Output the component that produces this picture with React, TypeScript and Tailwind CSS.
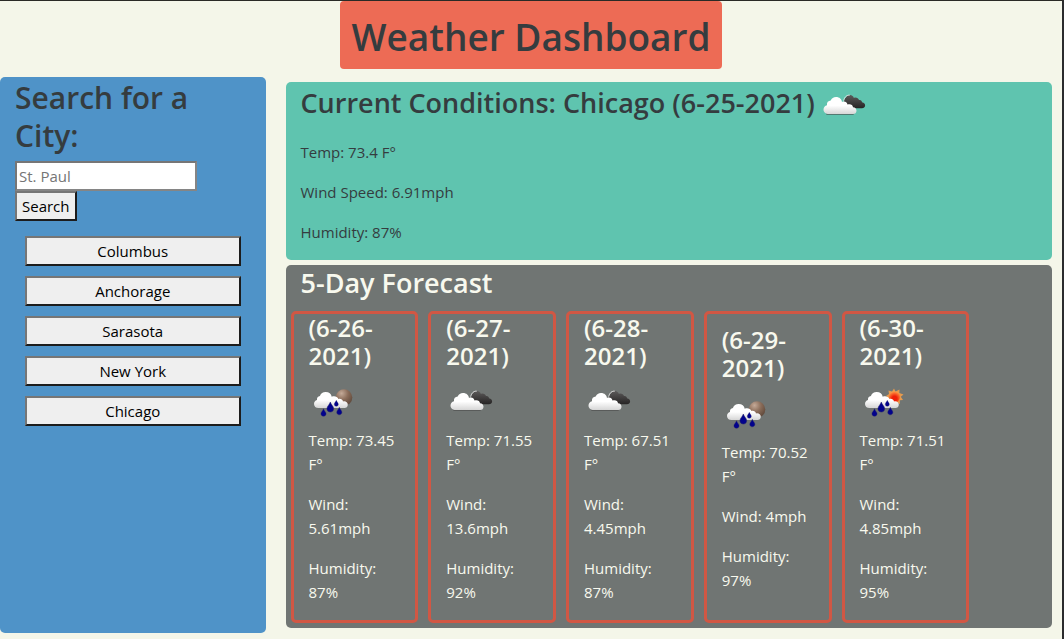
import React from "react";

type Sky = "broken" | "rain-night" | "rain-day";

const WHITE_CLOUD =
  "M10 32C6.500 32 4.500 30 4.500 27.400C4.500 25.300 6 23.600 8 23.200C7.600 20.500 9.300 18.600 11.700 18.500C12.600 16.300 14.500 15 17 15C20.500 15 22.700 17.300 23 20C25.600 19 28 20 28.500 22.600C31 21.500 33.800 22.600 34 25.200C36.200 25.300 37.500 26.800 37.500 28.700C37.500 30.700 36.200 32 34.200 32Z";
const RAIN_CLOUD =
  "M9.500 30C6.800 30 5 28.200 5 25.900C5 23.900 6.200 22.500 8 22C7.700 19.700 8.900 18.200 10.900 17.900C11.800 15.600 13.800 14 16.700 14C20 14 22.300 16 22.700 18.700C25.600 17.600 28.400 18.600 29.400 21C31.300 20.300 33.700 21.400 34 23.500C36.500 22.900 38.800 24.300 38.800 26.700C38.800 28.700 37.400 30 35.400 30Z";

function Drop({ x, y, s }: { x: number; y: number; s: number }) {
  return (
    <path
      d="M0 -4C0.600 -1.800 2.700 -0.600 2.700 1.400C2.700 3 1.500 4 0 4C-1.500 4 -2.700 3 -2.700 1.400C-2.700 -0.600 -0.600 -1.800 0 -4Z"
      transform={`translate(${x} ${y}) scale(${s})`}
      fill="#02028c"
      stroke="#23236b"
      strokeWidth="0.4"
    />
  );
}

function WeatherIcon({ sky, label }: { sky: Sky; label: string }) {
  const id = React.useId();
  return (
    <svg viewBox="0 0 50 50" className="block size-[50px] shrink-0" role="img" aria-label={label}>
      <defs>
        <linearGradient id={`${id}w`} x1="0" y1="0" x2="0" y2="1">
          <stop offset="0.5" stopColor="#ffffff" />
          <stop offset="1" stopColor="#d6d6d6" />
        </linearGradient>
        <linearGradient id={`${id}d`} x1="0" y1="0" x2="0" y2="1">
          <stop offset="0" stopColor="#5c5a5a" />
          <stop offset="1" stopColor="#262424" />
        </linearGradient>
        <radialGradient id={`${id}m`} cx="0.35" cy="0.25" r="0.8">
          <stop offset="0" stopColor="#c4aa98" />
          <stop offset="0.5" stopColor="#8a6c59" />
          <stop offset="1" stopColor="#5d4739" />
        </radialGradient>
        <radialGradient id={`${id}s`} cx="0.5" cy="0.65" r="0.65">
          <stop offset="0.35" stopColor="#ee1f08" />
          <stop offset="1" stopColor="#ff9a45" />
        </radialGradient>
      </defs>
      {sky === "broken" && (
        <>
          <path
            d="M25 21C25 17.500 25.600 16.500 26.800 15.800C27.300 13.700 29 12.700 31 13C33 13.300 34.400 14.200 34.900 15.900C36.900 14.900 39.400 16 40 18C41.700 17.500 43 18.800 43 20.300C45.200 20.500 46.300 22 46.100 23.800C45.900 25.400 44.700 26.300 43 26.300H29Z"
            fill={`url(#${id}d)`}
          />
          <path d="M24.700 18.600C25.400 15.300 27.700 12.900 30.700 13.200" fill="none" stroke="#f2f2f2" strokeWidth="0.9" />
          <path d="M8 32H34" stroke="#4a4a4a" strokeOpacity="0.6" strokeWidth="1.800" strokeLinecap="round" />
          <path d={WHITE_CLOUD} fill={`url(#${id}w)`} />
        </>
      )}
      {sky === "rain-night" && <circle cx="35" cy="19.500" r="8.300" fill={`url(#${id}m)`} />}
      {sky === "rain-day" && (
        <>
          <path
            d="M34 10.500L35.500 13.500L39.500 11.500L39.300 15L43.500 16.500L40.800 18.800L43 22L39.800 22.300L40 26L36.500 24.500L33 27L30 24L27 25L28.500 20L26 18L29 16L28.500 12.500L32 13.500Z"
            fill="#e59a4e"
          />
          <circle cx="34.500" cy="19" r="5.500" fill={`url(#${id}s)`} />
        </>
      )}
      {sky !== "broken" && (
        <>
          <path d={RAIN_CLOUD} fill={`url(#${id}w)`} />
          <Drop x={14.5} y={34.5} s={0.95} />
          <Drop x={21.3} y={29} s={1.25} />
          <Drop x={27.3} y={25.3} s={0.75} />
          <Drop x={30.3} y={33} s={0.95} />
        </>
      )}
    </svg>
  );
}

const cities = ["Columbus", "Anchorage", "Sarasota", "New York", "Chicago"];

const days: { date: string; sky: Sky; label: string; temp: string; wind: string; humidity: string }[] = [
  { date: "6-26-2021", sky: "rain-night", label: "Rain", temp: "73.45", wind: "5.61", humidity: "87" },
  { date: "6-27-2021", sky: "broken", label: "Broken clouds", temp: "71.55", wind: "13.6", humidity: "92" },
  { date: "6-28-2021", sky: "broken", label: "Broken clouds", temp: "67.51", wind: "4.45", humidity: "87" },
  { date: "6-29-2021", sky: "rain-night", label: "Rain", temp: "70.52", wind: "4", humidity: "97" },
  { date: "6-30-2021", sky: "rain-day", label: "Light rain", temp: "71.51", wind: "4.85", humidity: "95" },
];

const buttonStyle =
  "h-[30px] border-2 border-t-[#767676] border-l-[#767676] border-r-[#1c1c1c] border-b-[#1c1c1c] bg-[#efefef] px-[5px] text-black";

export default function App() {
  return (
    <div className="min-h-screen border-t border-r-2 border-t-[#2a2a26] border-r-[#2b2c2e] bg-[#f4f6e9] font-['Open_Sans','Noto_Sans',sans-serif] text-[15px] leading-6 text-[#353c3f]">
      <header className="mb-2 flex justify-center">
        <h1 className="rounded bg-[#ed6b55] px-3 pt-3 pb-2 text-[37px] leading-[48px] font-semibold">
          Weather Dashboard
        </h1>
      </header>

      <div className="flex">
        <aside className="w-1/4 rounded-[5px] bg-[#4f93c8] px-[15px]">
          <h2 className="mb-[6px] pt-[2px] text-[30px] leading-[38px] font-semibold">
            <label htmlFor="city">Search for a City:</label>
          </h2>
          <form onSubmit={(e) => e.preventDefault()}>
            <input
              id="city"
              type="text"
              placeholder="St. Paul"
              className="block h-[30px] w-[182px] border-2 border-t-[#767676] border-l-[#767676] border-r-[#858585] border-b-[#858585] bg-white px-[2px] text-black placeholder:text-[#757575]"
            />
            <button type="submit" className={buttonStyle}>
              Search
            </button>
          </form>
          <div className="flex flex-col gap-[10px] px-[10px] py-[15px]">
            {cities.map((city) => (
              <button key={city} type="button" className={`${buttonStyle} flex items-center justify-center`}>
                {city}
              </button>
            ))}
          </div>
        </aside>

        <main className="flex min-w-0 flex-1 flex-col gap-[5px] py-[5px] pr-[10px] pl-5">
          <section className="rounded-[5px] bg-[#5fc4af] px-[15px]">
            <h3 className="mb-2 flex items-center gap-1 text-[27px] leading-[34px] font-semibold">
              <span className="pb-2">Current Conditions: Chicago (6-25-2021)</span>
              <WeatherIcon sky="broken" label="Broken clouds" />
            </h3>
            <p className="mb-4">Temp: 73.4 F°</p>
            <p className="mb-4">Wind Speed: 6.91mph</p>
            <p className="pb-4">Humidity: 87%</p>
          </section>

          <section className="rounded-[5px] bg-[#707573] text-[#f8f9ee]">
            <h3 className="mb-[6px] px-[15px] text-[27px] leading-[35px] font-semibold">5-Day Forecast</h3>
            <div className="flex">
              {days.map((day) => (
                <article
                  key={day.date}
                  className="m-[5px] flex min-h-[312px] w-1/6 shrink-0 flex-col justify-center rounded-[5px] border-3 border-[#d15744] px-[15px]"
                >
                  <h4 className="mb-2 text-2xl leading-7 font-semibold">{`(${day.date})`}</h4>
                  <WeatherIcon sky={day.sky} label={day.label} />
                  <p className="mb-4">Temp: {day.temp} F°</p>
                  <p className="mb-4">Wind: {day.wind}mph</p>
                  <p className="mb-4">Humidity: {day.humidity}%</p>
                </article>
              ))}
            </div>
          </section>
        </main>
      </div>
    </div>
  );
}
